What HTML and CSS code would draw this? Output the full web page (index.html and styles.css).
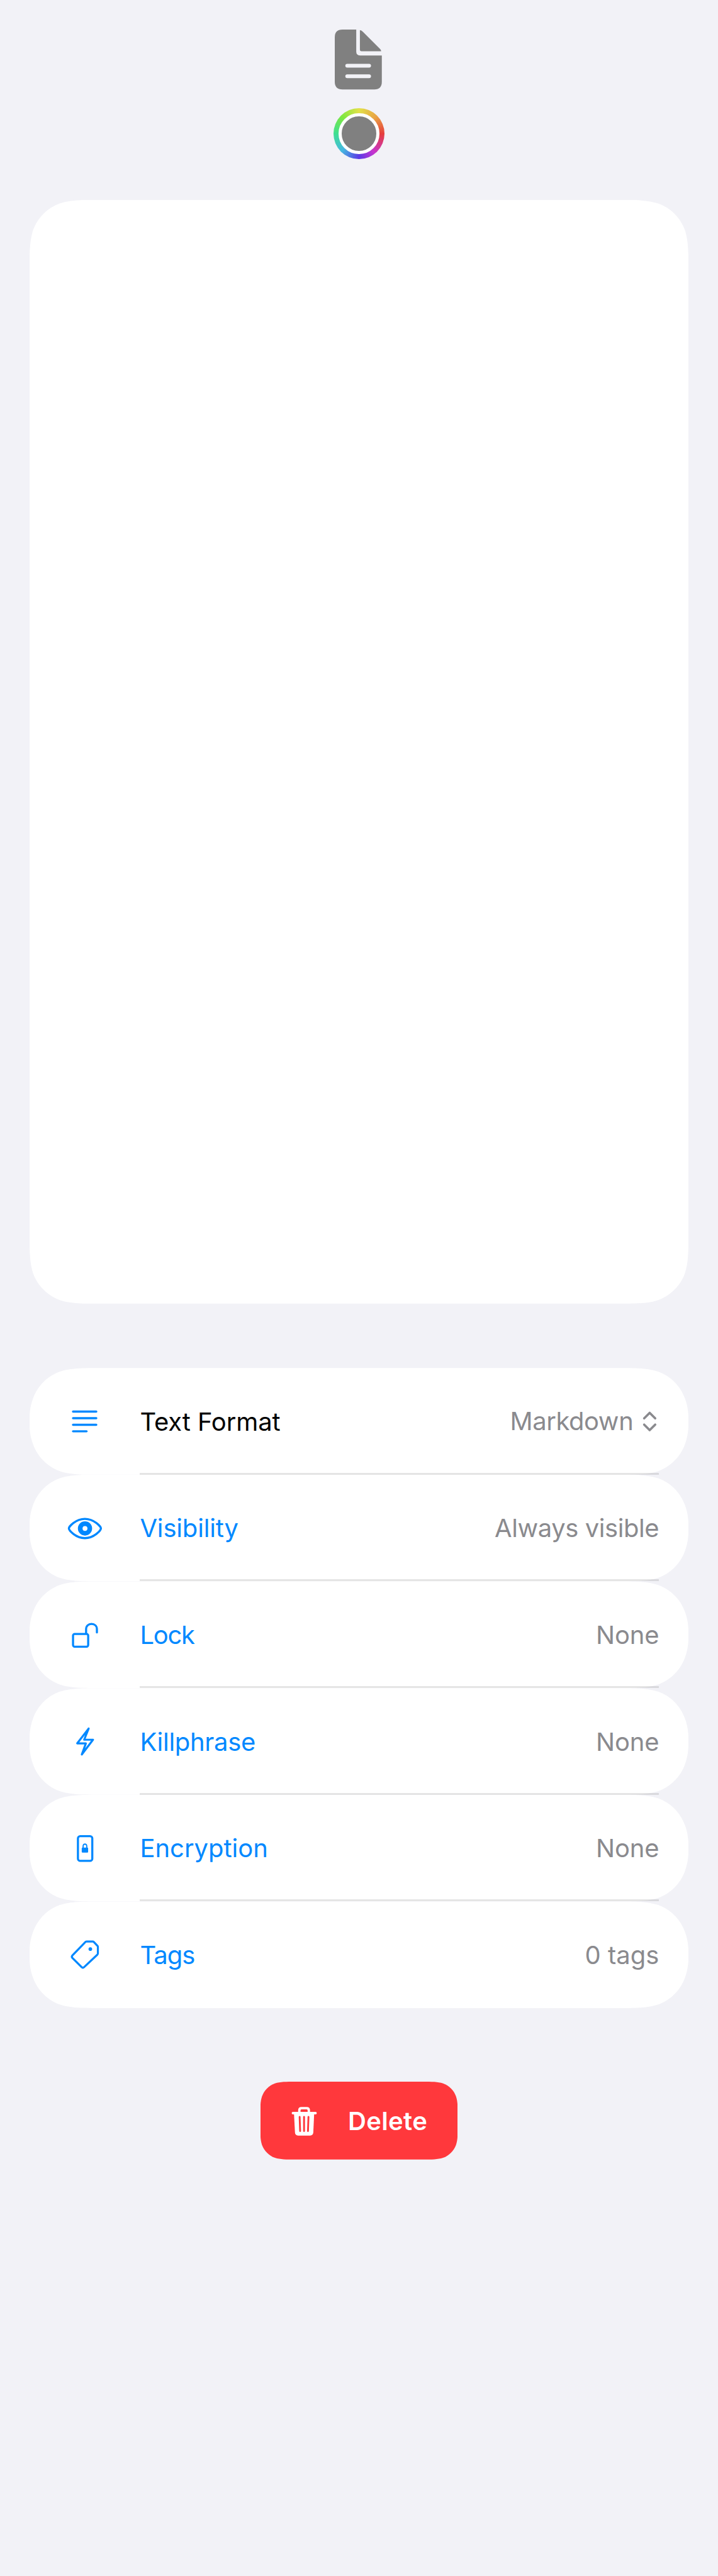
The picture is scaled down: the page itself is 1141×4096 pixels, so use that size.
FILE: index.html
```html
<!DOCTYPE html>
<html lang="en">
<head>
<meta charset="utf-8">
<meta name="viewport" content="width=device-width, initial-scale=1">
<title>Note settings</title>
<link rel="stylesheet" href="styles.css">
</head>
<body>
<main class="page">
  <header class="header">
    <svg class="doc-icon" viewBox="0 0 77 98" aria-hidden="true">
      <path fill="currentColor" d="M12.5 0H35V36Q35 42.200 41.200 42.200H76.700V85.500Q76.700 97.700 64.500 97.700H12.500Q0 97.700 0 85.500V12.500Q0 0 12.500 0Z"/>
      <path fill="currentColor" d="M41 1Q43.300 1 45.500 3.200L74 31.700Q75.600 33.400 75.600 35.500H43.500Q41 35.500 41 33Z"/>
      <path stroke="#f2f2f7" stroke-width="6.200" stroke-linecap="round" d="M20.300 58.900H56M20.300 76.100H56"/>
    </svg>
    <div class="color-well"><span class="color-swatch"></span></div>
  </header>

  <section class="editor smooth"></section>

  <ul class="settings">
    <li class="row row-format">
      <svg class="icon" viewBox="0 0 90 90" stroke-width="3.500" aria-hidden="true">
        <path d="M25.700 29.200H63.600M25.700 40H63.600M25.700 50.700H63.600M25.700 61.400H47.800"/>
      </svg>
      <span class="label">Text Format</span>
      <span class="value">Markdown</span>
      <svg class="chevrons" viewBox="0 0 30 44" aria-hidden="true">
        <path d="M5.800 16.700L14.800 7.700L23.800 16.700M5.800 26.900L14.800 35.900L23.800 26.900"/>
      </svg>
    </li>
    <li class="row row-visibility">
      <svg class="icon" viewBox="0 0 90 90" stroke-width="3.400" aria-hidden="true">
        <path d="M18.900 45.500C18.900 42.500 30 29.900 45 29.900S71.200 42.500 71.200 45.500S60 61.300 45 61.300S18.900 48.500 18.900 45.500Z"/>
        <circle cx="45.200" cy="45.500" r="7.800" stroke-width="7.600"/>
      </svg>
      <span class="label">Visibility</span>
      <span class="value">Always visible</span>
    </li>
    <li class="row row-lock">
      <svg class="icon" viewBox="0 0 90 90" stroke-width="3.400" aria-hidden="true">
        <rect x="25.700" y="44.200" width="24.700" height="20.800" rx="2.600"/>
        <path d="M47 43.500V36.500C47 31 50.800 27.900 55.800 27.900S64.600 31 64.600 36.500V41.700"/>
      </svg>
      <span class="label">Lock</span>
      <span class="value">None</span>
    </li>
    <li class="row row-killphrase">
      <svg class="icon" viewBox="0 0 90 90" stroke-width="3.300" aria-hidden="true">
        <path d="M51.200 24L32.500 48.300H46.600L40 66.500L58.300 42.300H43.900Z"/>
      </svg>
      <span class="label">Killphrase</span>
      <span class="value">None</span>
    </li>
    <li class="row row-encryption">
      <svg class="icon" viewBox="0 0 90 90" stroke-width="3.400" aria-hidden="true">
        <rect x="33.700" y="25.200" width="23.400" height="40.400" rx="3.600"/>
        <rect x="39.900" y="43.800" width="10.400" height="8.200" rx="1.300" fill="currentColor" stroke="none"/>
        <path stroke-width="1.900" d="M42.100 44.500V42C42.100 39.500 43.300 38.200 45.100 38.200S48.100 39.500 48.100 42V44.500"/>
      </svg>
      <span class="label">Encryption</span>
      <span class="value">None</span>
    </li>
    <li class="row row-tags">
      <svg class="icon" viewBox="0 0 90 90" stroke-width="3.300" aria-hidden="true">
        <path d="M46.400 24.100Q47 23.700 48 23.700H57.800Q58.800 23.700 59.600 24.500L65.400 30.700Q66.200 31.500 66.200 32.500V43.200Q66.200 44.300 65.400 45.100L44 65.300Q41.700 67.500 39.500 65.300L24.800 50.700Q22.700 48.500 24.800 46.200L45.400 24.900Q45.900 24.300 46.400 24.100Z"/>
        <circle cx="53.900" cy="36.100" r="2.900" fill="currentColor" stroke="none"/>
      </svg>
      <span class="label">Tags</span>
      <span class="value">0 tags</span>
    </li>
  </ul>

  <button class="delete smooth" type="button">
    <svg class="trash" viewBox="0 0 42 50" aria-hidden="true">
      <path d="M2.500 12.300H39.500M13 12V7.800Q13 4.300 16.500 4.300H25Q28.500 4.300 28.500 7.800V12" fill="none" stroke="#fff" stroke-width="3.900" stroke-linecap="round"/>
      <path fill="#fff" d="M4.300 13H37.200L35.800 43.700Q35.500 48.900 30.500 48.900H11Q6.200 48.900 5.900 43.700Z"/>
      <path stroke="#ff383c" stroke-width="3" stroke-linecap="round" d="M13.500 18.500L14.300 41.500M20.700 18.500V41.500M27.900 18.500L27.100 41.500"/>
    </svg>
    <span class="delete-label">Delete</span>
  </button>
</main>
</body>
</html>
```
FILE: styles.css
```css
/* 1rem is ten design units */
html {
  font-size: 9.75px;
  background: #f2f2f7;
}

*, *::before, *::after { box-sizing: border-box; }

body {
  margin: 0;
  font-family: Inter, "Liberation Sans", sans-serif;
  -webkit-font-smoothing: antialiased;
}

.page {
  display: flex;
  flex-direction: column;
  align-items: center;
  min-height: 420rem;
  padding: 4.83rem 4.8rem 0;
}

.header {
  display: flex;
  flex-direction: column;
  align-items: center;
  gap: 2.97rem;
  height: 27.77rem;
}

.doc-icon {
  display: block;
  flex: none;
  width: 7.7rem;
  height: 9.8rem;
  margin-right: 0.1rem;
  color: #808080;
}

.color-well {
  display: grid;
  place-items: center;
  width: 8.4rem;
  height: 8.4rem;
  border-radius: 50%;
  background: conic-gradient(#e2e148, #e9a344 45deg, #e63e3c 90deg, #c534d0 142deg, #5a3ae6 180deg, #45b8e0 225deg, #3fdf92 270deg, #7de840 315deg, #e2e148);
}

.color-swatch {
  width: 6.6rem;
  height: 6.6rem;
  border: 0.6rem solid #fff;
  border-radius: 50%;
  background: #808080;
}

/* Continuous-curvature corners: --r is the radius, --v0..--v2 the vertical reach of the curve */
.smooth, .row::before {
  --r: 7.8rem;
  --v0: calc(var(--r) * 1.5287);
  --v1: calc(var(--r) * 1.0885);
  --v2: calc(var(--r) * 0.8684);
  --h0: calc(var(--r) * 1.5287);
  --h1: calc(var(--r) * 1.0885);
  --h2: calc(var(--r) * 0.8684);
  --k: calc(var(--r) * 0.6315);
  --e: calc(var(--r) * 0.0749);
  --m: calc(var(--r) * 0.3728);
  --n: calc(var(--r) * 0.1691);
  clip-path: shape(from var(--h0) 0px,
    line to calc(100% - var(--h0)) 0px,
    curve to calc(100% - var(--k)) var(--e) with calc(100% - var(--h1)) 0px / calc(100% - var(--h2)) 0px,
    curve to calc(100% - var(--e)) var(--k) with calc(100% - var(--m)) var(--n) / calc(100% - var(--n)) var(--m),
    curve to 100% var(--v0) with 100% var(--v2) / 100% var(--v1),
    line to 100% calc(100% - var(--v0)),
    curve to calc(100% - var(--e)) calc(100% - var(--k)) with 100% calc(100% - var(--v1)) / 100% calc(100% - var(--v2)),
    curve to calc(100% - var(--k)) calc(100% - var(--e)) with calc(100% - var(--n)) calc(100% - var(--m)) / calc(100% - var(--m)) calc(100% - var(--n)),
    curve to calc(100% - var(--h0)) 100% with calc(100% - var(--h2)) 100% / calc(100% - var(--h1)) 100%,
    line to var(--h0) 100%,
    curve to var(--k) calc(100% - var(--e)) with var(--h1) 100% / var(--h2) 100%,
    curve to var(--e) calc(100% - var(--k)) with var(--m) calc(100% - var(--n)) / var(--n) calc(100% - var(--m)),
    curve to 0px calc(100% - var(--v0)) with 0px calc(100% - var(--v2)) / 0px calc(100% - var(--v1)),
    line to 0px var(--v0),
    curve to var(--e) var(--k) with 0px var(--v1) / 0px var(--v2),
    curve to var(--k) var(--e) with var(--n) var(--m) / var(--m) var(--n),
    curve to var(--h0) 0px with var(--h2) 0px / var(--h1) 0px,
    close);
}

.editor {
  flex: none;
  width: 107.4rem;
  height: 180rem;
  background: #fff;
}

.settings {
  width: 107.4rem;
  margin: 10.5rem 0 0;
  padding: 0;
  list-style: none;
}

.row {
  position: relative;
  z-index: 0;
  display: flex;
  align-items: center;
  height: 17.4rem;
  padding: 0 4.8rem 0 4.5rem;
  font-size: 4.1rem;
  line-height: 5rem;
  color: #0088ff;
}

.row::before {
  --v0: 8.7rem;
  --v1: 7.7rem;
  --v2: 6.5rem;
  content: "";
  position: absolute;
  inset: 0;
  z-index: -1;
  background: #fff;
}

/* Hairline between rows, drawn over the corner gap as well */
.row:not(:last-child)::after {
  content: "";
  position: absolute;
  left: 18rem;
  right: 4.8rem;
  bottom: 0;
  height: 3px;
  background: rgba(0, 0, 0, 0.1);
}

.icon {
  flex: none;
  width: 9rem;
  height: 9rem;
  fill: none;
  stroke: currentColor;
  stroke-linecap: round;
  stroke-linejoin: round;
}

.label {
  flex: 1;
  margin-left: 4.5rem;
  padding-top: 0.2rem;
  letter-spacing: -0.03rem;
}

.value {
  padding-top: 0.2rem;
  color: #8a8a8e;
  letter-spacing: -0.02rem;
}

.row-format .label { color: #000; letter-spacing: -0.01rem; }
.row-format .value { padding-top: 0; letter-spacing: -0.045rem; }
.row-visibility .label { letter-spacing: -0.015rem; }
.row-visibility .value { letter-spacing: -0.042rem; }
.row-lock .label { letter-spacing: -0.13rem; }
.row-encryption .label { letter-spacing: 0; }
.row-tags .label { letter-spacing: -0.1rem; }
.row-tags .value { letter-spacing: 0; }

.chevrons {
  flex: none;
  width: 3rem;
  height: 4.4rem;
  margin-left: 1.2rem;
  fill: none;
  stroke: #8a8a8e;
  stroke-width: 3.8;
  stroke-linecap: round;
  stroke-linejoin: round;
}

.delete {
  --r: 3.8rem;
  display: flex;
  flex: none;
  align-items: center;
  width: 32.2rem;
  height: 12.7rem;
  margin-top: 12rem;
  padding: 0 0 0 5.1rem;
  border: 0;
  background: #ff383c;
  color: #fff;
  font: 600 4.1rem/5rem Inter, "Liberation Sans", sans-serif;
}

.trash {
  flex: none;
  width: 4.2rem;
  height: 5rem;
}

.delete-label {
  margin-left: 5rem;
  padding-top: 0.2rem;
  letter-spacing: 0.04rem;
}
```
